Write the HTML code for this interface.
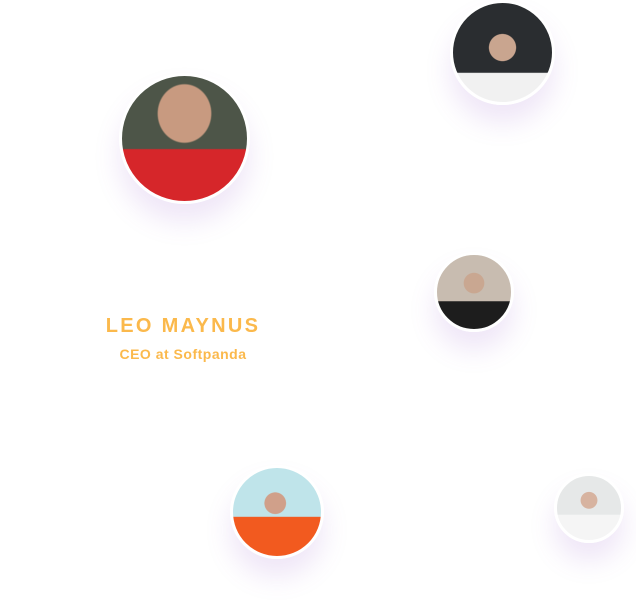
<!DOCTYPE html>
<html><head><style>
html,body{margin:0;padding:0;width:636px;height:607px;background:#fff;overflow:hidden;position:relative;font-family:"Liberation Sans",sans-serif}
.c{position:absolute;border-radius:50%;border:3px solid #fff;box-sizing:border-box;box-shadow:0 18px 26px rgba(150,90,200,0.15);overflow:hidden}
.t1{position:absolute;left:0;width:366px;text-align:center;top:315px;font-size:20px;font-weight:bold;color:#fbb94c;letter-spacing:2.3px}
.t2{position:absolute;left:0;width:366px;text-align:center;top:346px;font-size:14px;font-weight:bold;color:#fbb94c;letter-spacing:0.5px}
</style></head><body>
<div class="c" style="left:450px;top:0;width:105px;height:105px;background:radial-gradient(circle at 50% 45%,#c9a58f 0 18%,transparent 19%),linear-gradient(to bottom,#2a2d30 0 70%,#f1f1f1 71%)"></div>
<div class="c" style="left:119px;top:73px;width:131px;height:131px;background:radial-gradient(ellipse 22% 24% at 50% 30%,#c89a80 0 95%,transparent 100%),linear-gradient(to bottom,#4d5548 0 58%,#d6262a 59%)"></div>
<div class="c" style="left:434px;top:252px;width:80px;height:80px;background:radial-gradient(circle at 50% 38%,#c9a791 0 17%,transparent 18%),linear-gradient(to bottom,#c8bcb0 0 62%,#1d1d1d 63%)"></div>
<div class="c" style="left:230px;top:465px;width:94px;height:94px;background:radial-gradient(circle at 48% 40%,#d0a08a 0 15%,transparent 16%),linear-gradient(to bottom,#bfe4ea 0 55%,#f25a1f 56%)"></div>
<div class="c" style="left:554px;top:473px;width:70px;height:70px;background:radial-gradient(circle at 50% 38%,#d7b3a0 0 16%,transparent 17%),linear-gradient(to bottom,#e6e8e8 0 60%,#f5f5f5 61%)"></div>
<div class="t1">LEO MAYNUS</div>
<div class="t2">CEO at Softpanda</div>
</body></html>
